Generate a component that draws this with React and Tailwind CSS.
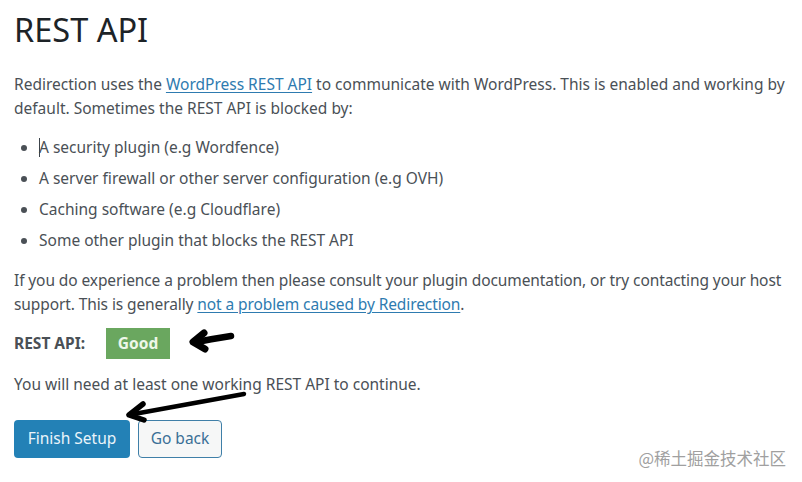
export default function App() {
  return (
    <div className="relative w-[802px] h-[482px] bg-white overflow-hidden font-['Noto_Sans',sans-serif] text-[#4a5056]">
      <div className="px-[14px] pt-[10px]">
        {/* HEADER */}
        <h1 className="text-[32.5px] leading-[40px] text-[#1d2327] font-normal">REST API</h1>

        <p className="mt-[22px] text-[15.5px] leading-[24px] whitespace-nowrap">
          Redirection uses the{" "}
          <a href="#" className="text-[#2e7bb0] underline underline-offset-2">WordPress REST API</a>{" "}
          to communicate with WordPress. This is enabled and working by
          <br />
          default. Sometimes the REST API is blocked by:
        </p>

        <ul className="mt-[15px] pl-[25px] flex flex-col gap-[7px] text-[15.5px] leading-[24px] list-disc marker:text-[#4a5056]">
          <li className="relative">
            <span className="absolute left-0 top-[3px] h-[19px] w-px bg-[#3c434a]" />
            A security plugin (e.g Wordfence)
          </li>
          <li>A server firewall or other server configuration (e.g OVH)</li>
          <li>Caching software (e.g Cloudflare)</li>
          <li>Some other plugin that blocks the REST API</li>
        </ul>

        <p className="mt-[16px] text-[15.5px] leading-[24px] whitespace-nowrap tracking-[-0.1px]">
          If you do experience a problem then please consult your plugin documentation, or try contacting your host
          <br />
          support. This is generally{" "}
          <a href="#" className="text-[#2e7bb0] underline underline-offset-2">not a problem caused by Redirection</a>.
        </p>

        <div className="mt-[12px] flex items-center h-[31px] text-[15.5px]">
          <span className="font-bold w-[92px]">REST API:</span>
          <span className="h-[31px] w-[64px] flex items-center justify-center bg-[#6aa75f] text-[#eef7e9] font-bold">Good</span>
        </div>

        <p className="mt-[13px] text-[15.5px] leading-[24px]">You will need at least one working REST API to continue.</p>

        <div className="mt-[24px] flex gap-[8px] text-[15.5px]">
          <button className="h-[38px] w-[116px] rounded-[4px] bg-[#2381b6] text-[#eaf4fa]">Finish Setup</button>
          <button className="h-[38px] w-[84px] rounded-[4px] border border-[#3f7fa8] bg-[#f6f7f7] text-[#3a6f96]">Go back</button>
        </div>
      </div>

      {/* annotation arrows */}
      <svg className="absolute left-0 top-0" width="802" height="482" viewBox="0 0 802 482" fill="none">
        <path d="M231 336 C 218 338, 206 340, 197 342" stroke="#000" strokeWidth="6.5" strokeLinecap="round" />
        <path d="M204 333 L 193 342 L 205 349" stroke="#000" strokeWidth="7" strokeLinecap="round" strokeLinejoin="round" />
        <path d="M244 394 C 205 401, 168 408, 134 414" stroke="#000" strokeWidth="4.5" strokeLinecap="round" />
        <path d="M143 404 L 129 415 L 144 420" stroke="#000" strokeWidth="5.5" strokeLinecap="round" strokeLinejoin="round" />
      </svg>

      <div className="absolute right-[16px] bottom-[13px] text-[16.5px] leading-[22px] text-[#a0a0a0] font-['Noto_Sans_CJK_SC',sans-serif]">
        @稀土掘金技术社区
      </div>
    </div>
  );
}
